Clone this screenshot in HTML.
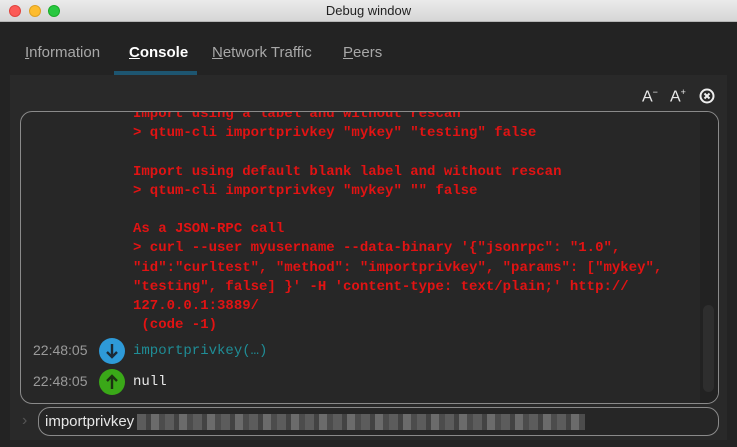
<!DOCTYPE html>
<html><head><style>
*{margin:0;padding:0;box-sizing:border-box}
body{width:737px;height:447px;background:#232323;position:relative;overflow:hidden;font-family:"Liberation Sans",sans-serif}
.title{position:absolute;left:0;top:0;width:737px;height:22px;background:linear-gradient(#ebebeb,#d6d6d6);border-bottom:1px solid #b5b5b5;text-align:center;font-size:13px;line-height:22px;color:#222}
.dot{position:absolute;top:5px;width:12px;height:12px;border-radius:50%}
.tab{position:absolute;top:44px;font-size:15px;color:#a8a8a8}
.tab u{text-decoration:underline}
.panel{position:absolute;left:10px;top:75px;width:717px;height:365px;background:#292929}
.box{position:absolute;left:20px;top:111px;width:699px;height:293px;border:1px solid #8a8a8a;border-radius:12px;background:#272727;overflow:hidden}
.mono{font-family:"Liberation Mono",monospace;font-size:14px;line-height:19.2px;font-weight:bold;color:#e21313;position:absolute;left:112px;white-space:pre}
.ts{position:absolute;left:12px;font-size:14px;color:#9a9a9a}
.ic{position:absolute;left:78px;width:26px;height:26px;border-radius:50%}
</style></head><body>
<div class="title">Debug window</div>
<div class="dot" style="left:9px;background:#fc5b57;border:1px solid #e0443e"></div>
<div class="dot" style="left:29px;background:#fdbc2e;border:1px solid #dea123"></div>
<div class="dot" style="left:48px;background:#28c840;border:1px solid #1aab29"></div>
<div class="tab" style="left:25px"><u>I</u>nformation</div>
<div class="tab" style="left:129px;color:#fff;font-weight:bold"><u>C</u>onsole</div>
<div class="tab" style="left:212px"><u>N</u>etwork Traffic</div>
<div class="tab" style="left:343px"><u>P</u>eers</div>
<div style="position:absolute;left:114px;top:71px;width:83px;height:4px;background:#1d5570"></div>
<div class="panel"></div>
<div style="position:absolute;left:642px;top:87px;color:#e8e8e8;font-size:16px">A<sup style="font-size:9px">−</sup></div>
<div style="position:absolute;left:670px;top:87px;color:#e8e8e8;font-size:16px">A<sup style="font-size:9px">+</sup></div>
<svg style="position:absolute;left:699px;top:88px" width="16" height="16" viewBox="0 0 16 16"><circle cx="8" cy="8" r="6.5" fill="none" stroke="#eee" stroke-width="2"/><path d="M5.5 5.5L10.5 10.5M10.5 5.5L5.5 10.5" stroke="#eee" stroke-width="2"/></svg>
<div class="box">
<div style="position:absolute;right:0;top:0;width:18px;height:100%;background:#222"></div>
<div style="position:absolute;right:4px;top:193px;width:11px;height:87px;border-radius:6px;background:#2e2e2e"></div>
<div class="mono" style="top:-7px">Import using a label and without rescan
&gt; qtum-cli importprivkey "mykey" "testing" false

Import using default blank label and without rescan
&gt; qtum-cli importprivkey "mykey" "" false

As a JSON-RPC call
&gt; curl --user myusername --data-binary '{"jsonrpc": "1.0",
"id":"curltest", "method": "importprivkey", "params": ["mykey",
"testing", false] }' -H 'content-type: text/plain;' http://
127.0.0.1:3889/
 (code -1)</div>
<div class="ts" style="top:230px">22:48:05</div>
<div class="ic" style="top:226px;background:#2e9ad8"></div>
<svg style="position:absolute;left:78px;top:226px" width="26" height="26"><path d="M13 6V19M8 14L13 19L18 14" stroke="#1b2a36" stroke-width="2.4" fill="none"/></svg>
<div class="mono" style="top:230px;color:#1f8d96;font-weight:normal">importprivkey(…)</div>
<div class="ts" style="top:261px">22:48:05</div>
<div class="ic" style="top:257px;background:#3aa818"></div>
<svg style="position:absolute;left:78px;top:257px" width="26" height="26"><path d="M13 20V7M8 12L13 7L18 12" stroke="#1c3212" stroke-width="2.4" fill="none"/></svg>
<div class="mono" style="top:261px;color:#e8e8e8;font-weight:normal">null</div>
</div>
<div style="position:absolute;left:22px;top:412px;color:#555;font-size:16px">›</div>
<div style="position:absolute;left:38px;top:407px;width:681px;height:29px;border:1px solid #8a8a8a;border-radius:12px;background:#262626"></div>
<div style="position:absolute;left:45px;top:413px;font-size:15px;color:#e6e6e6">importprivkey</div>
<div style="position:absolute;left:137px;top:414px;width:448px;height:16px;background:repeating-linear-gradient(90deg,#6a6a6a 0 9px,#4a4a4a 9px 14px,#7c7c7c 14px 22px,#555 22px 28px);opacity:.8"></div>
</body></html>
